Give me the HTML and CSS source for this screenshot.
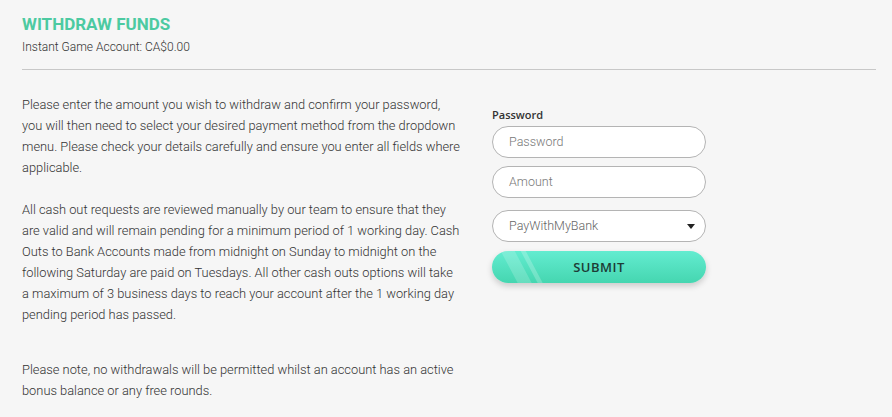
FILE: index.html
```html
<!DOCTYPE html>
<html>
<head>
<meta charset="utf-8">
<link rel="stylesheet" href="styles.css">
</head>
<body>
<div class="page">
  <header class="head">
    <h1 class="title">WITHDRAW FUNDS</h1>
    <div class="sub">Instant Game Account: CA$0.00</div>
  </header>
  <hr class="rule">
  <div class="content">
    <div class="info">
      <p class="p1">Please enter the amount you wish to withdraw and confirm your password, you will then need to select your desired payment method from the dropdown menu. Please check your details carefully and ensure you enter all fields where applicable.</p>
      <p class="p2">All cash out requests are reviewed manually by our team to ensure that they are valid and will remain pending for a minimum period of 1 working day. Cash Outs to Bank Accounts made from midnight on Sunday to midnight on the following Saturday are paid on Tuesdays. All other cash outs options will take a maximum of 3 business days to reach your account after the 1 working day pending period has passed.</p>
      <p class="p3">Please note, no withdrawals will be permitted whilst an account has an active bonus balance or any free rounds.</p>
    </div>
    <form class="form">
      <label class="label">Password</label>
      <div class="field">Password</div>
      <div class="field">Amount</div>
      <div class="field select">PayWithMyBank<span class="caret"></span></div>
      <div class="submit"><span class="stripe s1"></span><span class="stripe s2"></span><span class="btxt">SUBMIT</span></div>
    </form>
  </div>
</div>
</body>
</html>
```
FILE: styles.css
```css
html, body { margin: 0; padding: 0; }
body {
  background: #f6f6f6;
  font-family: Roboto, "Liberation Sans", sans-serif;
  color: #444;
  width: 892px;
  height: 417px;
  overflow: hidden;
}
.page { padding: 14px 16px 0 22px; }
.title {
  margin: 0;
  font-size: 17px;
  font-weight: 700;
  color: #4ccaa1;
  line-height: 20px;
}
.sub {
  margin-top: 5px;
  font-size: 12px;
  line-height: 16px;
  color: #333;
  font-weight: 300;
}
.rule {
  margin: 14px 0 0 0;
  border: 0;
  border-top: 1px solid #c8c8c8;
  height: 0;
}
.content { display: flex; padding-top: 24px; }
.info { width: 439px; flex: none; font-size: 12.85px; line-height: 21px; font-weight: 300; color: #333; }
.info p { margin: 0; }
.p2 { margin-top: 21px !important; }
.p3 { margin-top: 34px !important; }
.form {
  margin-left: 31px;
  margin-top: 14px;
  width: 214px;
  display: flex;
  flex-direction: column;
}
.label {
  font-family: "Open Sans", Lato, sans-serif;
  font-size: 11px;
  font-weight: 600;
  color: #333;
  line-height: 14px;
  margin-bottom: 4px;
}
.field {
  box-sizing: border-box;
  height: 32px;
  border: 1px solid #b4b4b4;
  border-radius: 16px;
  background: #fff;
  padding-left: 16px;
  font-size: 12.5px;
  line-height: 30px;
  color: #777;
  font-weight: 300;
  margin-bottom: 8px;
  position: relative;
}
.select { margin-top: 4px; color: #666; }
.caret {
  position: absolute;
  right: 10px;
  top: 13px;
  width: 0; height: 0;
  border-left: 4px solid transparent;
  border-right: 4px solid transparent;
  border-top: 5px solid #222;
}
.submit {
  position: relative;
  overflow: hidden;
  height: 32px;
  border-radius: 16px;
  margin-top: 1px;
  background: linear-gradient(180deg, #63ecd0 0%, #45d6b0 100%);
  box-shadow: 0 3px 6px rgba(0,0,0,0.18);
  text-align: center;
}
.stripe {
  position: absolute;
  top: -5px;
  height: 45px;
  background: rgba(255,255,255,0.18);
  transform: skewX(28deg);
}
.s1 { left: 18px; width: 14px; }
.s2 { left: 38px; width: 5px; background: rgba(255,255,255,0.22); }
.btxt {
  position: relative;
  font-family: "Open Sans", Lato, sans-serif;
  font-weight: 600;
  font-size: 13px;
  line-height: 32px;
  color: #1d3c36;
  letter-spacing: 0.5px;
}
```
